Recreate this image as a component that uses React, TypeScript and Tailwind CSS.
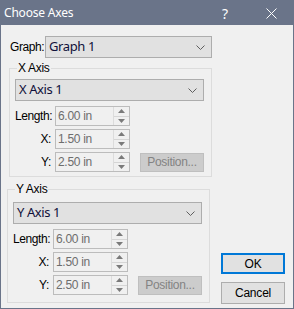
import React from 'react'

const ui = { fontFamily: '"Liberation Sans", Arial, sans-serif' }
const combo = { fontFamily: '"Noto Sans", "Liberation Sans", sans-serif' }

const Chevron = () => (
  <svg width="9" height="5" viewBox="0 0 9 5" className="shrink-0">
    <path d="M0.5 0.5 L4.5 4.5 L8.5 0.5" fill="none" stroke="#5f5f5f" strokeWidth="1" />
  </svg>
)

const Combo = ({ text, w }: { text: string; w: string }) => (
  <div className={`${w} flex h-[22px] items-center justify-between border border-[#adadad] bg-[#e1e1e1] pl-[3px] pr-[6px]`}>
    <span className="text-[13px] tracking-[-0.4px] text-[#10103a]" style={combo}>{text}</span>
    <Chevron />
  </div>
)

const Spin = ({ value }: { value: string }) => (
  <div className="flex h-[20px] w-[75px] border border-[#bcbcbc] bg-[#f0f0f0]">
    <div className="flex flex-1 items-center pl-[2px] text-[12px] tracking-[-0.3px] text-[#6d6d6d]">{value}</div>
    <div className="flex w-[16px] flex-col border-l border-[#dcdcdc]">
      <div className="flex flex-1 items-center justify-center border-b border-[#d5d5d5]">
        <svg width="7" height="4" viewBox="0 0 7 4"><path d="M3.5 0 L7 4 L0 4 Z" fill="#7a7a7a" /></svg>
      </div>
      <div className="flex flex-1 items-center justify-center">
        <svg width="7" height="4" viewBox="0 0 7 4"><path d="M0 0 L7 0 L3.5 4 Z" fill="#7a7a7a" /></svg>
      </div>
    </div>
  </div>
)

const Row = ({ label, value, button }: { label: string; value: string; button?: boolean }) => (
  <div className="flex h-[20px] items-center">
    <span className="w-[36px] whitespace-nowrap text-right text-[12px] tracking-[-0.4px] text-black">{label}</span>
    <div className="ml-[4px]"><Spin value={value} /></div>
    {button ? (
      <div className="ml-[10px] flex h-[19px] w-[64px] items-center justify-center border border-[#bfbfbf] bg-[#cccccc] text-[12px] tracking-[-0.3px] text-[#838383]">
        Position...
      </div>
    ) : null}
  </div>
)

const Group = (props: any) => {
  const { title, text, box, pad } = props
  return (
    <div className={`relative w-[203px] border border-[#dcdcdc] ${box}`}>
      <span className="absolute -top-[8px] left-[7px] bg-[#f0f0f0] px-[1px] text-[12px] leading-[14px] tracking-[-0.3px] text-black">{title}</span>
      <div className={pad}>
        <Combo text={text} w="w-[189px]" />
      </div>
      <div className="mt-[5px] flex flex-col gap-[3px] pl-[5px]">
        <Row label="Length:" value="6.00 in" />
        <Row label="X:" value="1.50 in" />
        <Row label="Y:" value="2.50 in" button />
      </div>
    </div>
  )
}

export default function App() {
  return (
    <div className="flex h-[309px] w-[294px] flex-col border border-[#6a7489] bg-[#f0f0f0]" style={ui}>
      <div className="flex h-[24px] shrink-0 items-center bg-[#6a7489] text-white" style={combo}>
        <span className="ml-[3px] text-[12px] tracking-[-0.2px]">Choose Axes</span>
        <span className="ml-auto mr-[38px] text-[14px]">?</span>
        <svg width="11" height="11" viewBox="0 0 11 11" className="mr-[16px]">
          <path d="M0.5 0.5 L10.5 10.5 M10.5 0.5 L0.5 10.5" stroke="#ffffff" strokeWidth="1" />
        </svg>
      </div>

      <div className="ml-[9px] mt-[11px] flex items-center">
        <span className="w-[35px] whitespace-nowrap text-[12px] tracking-[-0.4px] text-black">Graph:</span>
        <Combo text="Graph 1" w="w-[167px]" />
      </div>

      <div className="flex">
        <div className="flex flex-col">
          <Group title="X Axis" text="X Axis 1" box="ml-[8px] mt-[10px] h-[109px]" pad="pl-[5px] pt-[10px]" />
          <Group title="Y Axis" text="Y Axis 1" box="ml-[6px] mt-[12px] h-[114px]" pad="pl-[5px] pt-[12px]" />
        </div>
        <div className="mb-[-1px] ml-[9px] flex flex-col justify-end gap-[8px] text-[12px] tracking-[-0.2px] text-black">
          <div className="flex h-[21px] w-[64px] items-center justify-center border-2 border-[#0078d7] bg-[#e1e1e1]">OK</div>
          <div className="flex h-[22px] w-[64px] items-center justify-center border border-[#adadad] bg-[#e1e1e1]">Cancel</div>
        </div>
      </div>
    </div>
  )
}
